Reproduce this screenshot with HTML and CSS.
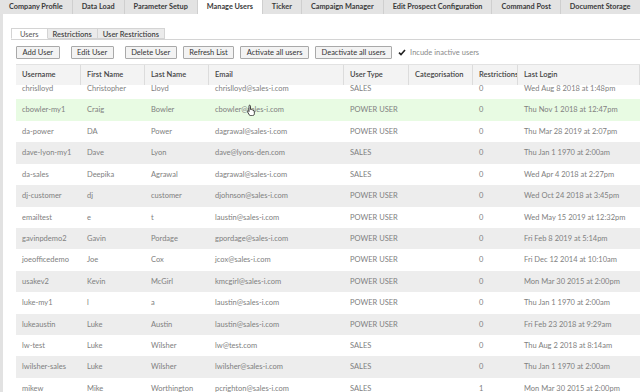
FILE: index.html
```html
<!DOCTYPE html>
<html lang="en">

<head>
    <meta charset="UTF-8">
    <title>Manage Users</title>
    <link rel="stylesheet" href="styles.css">
</head>

<body>
    <nav class="topnav">
        <div class="topnav_tab">Company Profile</div>
        <div class="topnav_tab">Data Load</div>
        <div class="topnav_tab">Parameter Setup</div>
        <div class="topnav_tab active">Manage Users</div>
        <div class="topnav_tab">Ticker</div>
        <div class="topnav_tab">Campaign Manager</div>
        <div class="topnav_tab">Edit Prospect Configuration</div>
        <div class="topnav_tab">Command Post</div>
        <div class="topnav_tab">Document Storage</div>
    </nav>

    <div class="main">
        <div class="subtabs">
            <div class="subtab active">Users</div>
            <div class="subtab">Restrictions</div>
            <div class="subtab">User Restrictions</div>
        </div>

        <div class="content">
            <div class="toolbar">
                <button class="btn">Add User</button>
                <button class="btn">Edit User</button>
                <button class="btn">Delete User</button>
                <button class="btn">Refresh List</button>
                <button class="btn">Activate all users</button>
                <button class="btn">Deactivate all users</button>
                <label class="check">
                    <span class="check_box">
                        <svg width="8" height="7" viewBox="0 0 8 7"><path d="M1 3.6 L3 5.6 L7 1" fill="none" stroke="#222" stroke-width="1.6"/></svg>
                    </span>
                    Incude inactive users
                </label>
            </div>

            <div class="grid">
                <div class="grid_head">
                    <div>Username</div>
                    <div>First Name</div>
                    <div>Last Name</div>
                    <div>Email</div>
                    <div>User Type</div>
                    <div>Categorisation</div>
                    <div>Restrictions</div>
                    <div>Last Login</div>
                </div>
                <div class="grid_body">
                    <div class="row"><div>chrislloyd</div><div>Christopher</div><div>Lloyd</div><div>chrislloyd@sales-i.com</div><div>SALES</div><div></div><div>0</div><div>Wed Aug 8 2018 at 1:48pm</div></div>
                    <div class="row hover"><div>cbowler-my1</div><div>Craig</div><div>Bowler</div><div class="cursor_cell">cbowler@sales-i.com
                        <svg class="cursor" width="11" height="12" viewBox="0 0 11 12"><path d="M3.5 1.2c.6 0 1 .4 1 1v3.3l.3-.1c.5-.2 1 .1 1.1.5.5-.3 1.1 0 1.2.5.5-.2 1 .1 1.1.6l.2 2.4c0 1.3-.8 2.3-2 2.3H4.8c-.7 0-1.2-.3-1.6-.9L1.4 7.6c-.3-.5 0-1 .5-1 .3 0 .6.1.8.4l.3.5V2.2c0-.6.2-1 .5-1z" fill="#fff" stroke="#111" stroke-width=".8"/></svg>
                    </div><div>POWER USER</div><div></div><div>0</div><div>Thu Nov 1 2018 at 12:47pm</div></div>
                    <div class="row"><div>da-power</div><div>DA</div><div>Power</div><div>dagrawal@sales-i.com</div><div>POWER USER</div><div></div><div>0</div><div>Thu Mar 28 2019 at 2:07pm</div></div>
                    <div class="row"><div>dave-lyon-my1</div><div>Dave</div><div>Lyon</div><div>dave@lyons-den.com</div><div>SALES</div><div></div><div>0</div><div>Thu Jan 1 1970 at 2:00am</div></div>
                    <div class="row"><div>da-sales</div><div>Deepika</div><div>Agrawal</div><div>dagrawal@sales-i.com</div><div>SALES</div><div></div><div>0</div><div>Wed Apr 4 2018 at 2:27pm</div></div>
                    <div class="row"><div>dj-customer</div><div>dj</div><div>customer</div><div>djohnson@sales-i.com</div><div>POWER USER</div><div></div><div>0</div><div>Wed Oct 24 2018 at 3:45pm</div></div>
                    <div class="row"><div>emailtest</div><div>e</div><div>t</div><div>laustin@sales-i.com</div><div>POWER USER</div><div></div><div>0</div><div>Wed May 15 2019 at 12:32pm</div></div>
                    <div class="row"><div>gavinpdemo2</div><div>Gavin</div><div>Pordage</div><div>gpordage@sales-i.com</div><div>POWER USER</div><div></div><div>0</div><div>Fri Feb 8 2019 at 5:14pm</div></div>
                    <div class="row"><div>joeofficedemo</div><div>Joe</div><div>Cox</div><div>jcox@sales-i.com</div><div>POWER USER</div><div></div><div>0</div><div>Fri Dec 12 2014 at 10:10am</div></div>
                    <div class="row"><div>usakev2</div><div>Kevin</div><div>McGirl</div><div>kmcgirl@sales-i.com</div><div>POWER USER</div><div></div><div>0</div><div>Mon Mar 30 2015 at 2:00pm</div></div>
                    <div class="row"><div>luke-my1</div><div>l</div><div>a</div><div>laustin@sales-i.com</div><div>POWER USER</div><div></div><div>0</div><div>Thu Jan 1 1970 at 2:00am</div></div>
                    <div class="row"><div>lukeaustin</div><div>Luke</div><div>Austin</div><div>laustin@sales-i.com</div><div>POWER USER</div><div></div><div>0</div><div>Fri Feb 23 2018 at 9:29am</div></div>
                    <div class="row"><div>lw-test</div><div>Luke</div><div>Wilsher</div><div>lw@test.com</div><div>SALES</div><div></div><div>0</div><div>Thu Aug 2 2018 at 8:14am</div></div>
                    <div class="row"><div>lwilsher-sales</div><div>Luke</div><div>Wilsher</div><div>lwilsher@sales-i.com</div><div>SALES</div><div></div><div>0</div><div>Thu Jan 1 1970 at 2:00am</div></div>
                    <div class="row"><div>mikew</div><div>Mike</div><div>Worthington</div><div>pcrighton@sales-i.com</div><div>SALES</div><div></div><div>1</div><div>Mon Mar 30 2015 at 2:00pm</div></div>
                </div>
            </div>
        </div>
    </div>
</body>

</html>
```

FILE: styles.css
```css
* {
    box-sizing: border-box;
}

html,
body {
    height: 392px;
    overflow: hidden;
}

body {
    margin: 0;
    font-family: Lato, 'Open Sans', sans-serif;
    font-size: 7.5px;
    color: #808080;
    background: #fff;
}

/* top navigation */
.topnav {
    display: flex;
    height: 14px;
    background: #e3e3e3;
}

.topnav_tab {
    padding: 0 9px;
    line-height: 14px;
    font-size: 7.3px;
    font-weight: bold;
    color: #3a3a3a;
    border-right: 1px solid #cfcfcf;
    white-space: nowrap;
}

.topnav_tab.active {
    background: #fff;
}

.main {
    height: 378px;
    border-left: 3px solid #e2e2e2;
    padding: 14px 0 0 8px;
}

/* sub tabs */
.subtabs {
    display: flex;
    height: 12px;
    border-bottom: 1px solid #d4d4d4;
}

.subtab {
    padding: 0 5px;
    line-height: 11px;
    color: #444;
    font-weight: 600;
    background: #ebebeb;
    border: 1px solid #d4d4d4;
    border-left: 0;
}

.subtab.active {
    padding: 0 8px;
    background: #fff;
    border-left: 1px solid #d4d4d4;
    border-bottom-color: #fff;
    font-weight: normal;
    color: #555;
}

.content {
    padding: 6px 0 0 5px;
}

/* toolbar */
.toolbar {
    display: flex;
    align-items: center;
    height: 13px;
}

.btn {
    height: 13px;
    padding: 0 5.5px;
    margin-right: 6px;
    font-family: inherit;
    font-size: 7.5px;
    font-weight: normal;
    color: #333;
    background: #f3f3f3;
    border: 1px solid #a9a9a9;
    border-radius: 1px;
}

.btn:nth-child(1),
.btn:nth-child(2) {
    margin-right: 11px;
}

.check {
    display: flex;
    align-items: center;
    gap: 4px;
    color: #8a8a8a;
}

.check_box {
    display: flex;
    align-items: center;
    justify-content: center;
    width: 8px;
    height: 8px;
}

/* users grid */
.grid {
    margin-top: 5px;
}

.grid_head,
.row {
    display: grid;
    grid-template-columns: 65px 64px 64px 135px 65px 64px 45px 1fr;
}

.grid_head {
    height: 21px;
    background: #f3f3f3;
    border-top: 1px solid #e2e2e2;
    color: #444;
    font-weight: 600;
}

.grid_head div {
    padding-left: 6px;
    line-height: 20px;
    border-right: 1px solid #dcdcdc;
    white-space: nowrap;
    overflow: hidden;
}

.grid_body {
    height: 308px;
    overflow: hidden;
}

.row {
    height: 21.43px;
    line-height: 21.43px;
}

.row:first-child {
    margin-top: -7px;
}

.row:nth-child(even) {
    background: #ededed;
}

.row.hover {
    background: #e8fbe3;
}

.row div {
    padding-left: 6px;
    white-space: nowrap;
    overflow: hidden;
}

.row .cursor_cell {
    position: relative;
    overflow: visible;
}

.cursor {
    position: absolute;
    left: 37px;
    top: 5px;
}
```
